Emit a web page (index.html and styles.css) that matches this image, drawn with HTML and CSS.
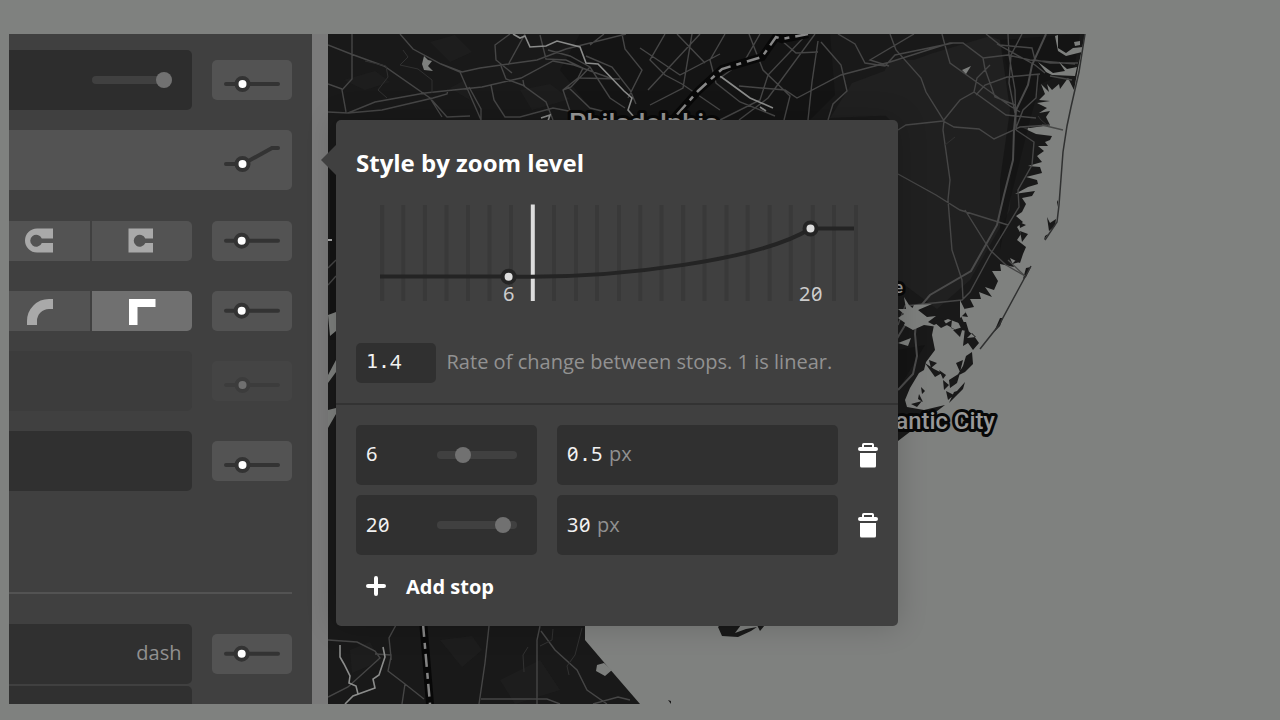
FILE: index.html
```
<!DOCTYPE html>
<html lang="en">
<head>
<meta charset="utf-8">
<title>Style by zoom level</title>
<link rel="stylesheet" href="styles.css">
</head>
<body>
<svg class="defs" width="0" height="0">
  <symbol id="flat" viewBox="0 0 80 40">
    <path d="M14 24H66" stroke="#333" stroke-width="4" stroke-linecap="round"/>
    <circle cx="30.500" cy="24" r="6" fill="#fff" stroke="#333" stroke-width="4"/>
  </symbol>
  <symbol id="flat-mid" viewBox="0 0 80 40">
    <path d="M14 19.700H66" stroke="#333" stroke-width="4" stroke-linecap="round"/>
    <circle cx="29.700" cy="19.700" r="6" fill="#fff" stroke="#333" stroke-width="4"/>
  </symbol>
  <symbol id="trash" viewBox="0 0 20 25">
    <path d="M5 4.500V1.800Q5 1 5.800 1H14.200Q15 1 15 1.800V4.500" fill="none" stroke="#fff" stroke-width="2"/>
    <rect y="4" width="20" height="4" rx="2" fill="#fff"/>
    <path d="M2 10H18V23Q18 24.500 16.500 24.500H3.500Q2 24.500 2 23Z" fill="#fff"/>
  </symbol>
</svg>
<main class="stage">
  <aside class="sidebar">
    <div class="row">
      <div class="field dark"><div class="slider"><i class="knob end"></i></div></div>
      <svg class="button"><use href="#flat"/></svg>
    </div>
    <div class="active-row">
      <svg width="80" height="60" viewBox="0 0 80 60" fill="none"><path d="M14 34H31L60 18H66" stroke="#333" stroke-width="4" stroke-linecap="round"/><circle cx="30.500" cy="34" r="6" fill="#fff" stroke="#333" stroke-width="4"/></svg>
    </div>
    <div class="row options">
      <div class="segments">
        <div class="segment left"><svg width="30" height="26" viewBox="0 0 30 26"><path d="M28 .5V10.500H16.800A6 6 0 1 0 16.800 15H28V24.500H12A12 12 0 0 1 12 .5Z" fill="#a9a9a9"/></svg></div>
        <div class="segment right"><svg width="26" height="26" viewBox="0 0 26 26"><path d="M.5 .5H25V10.500H17.300A6 6 0 1 0 17.300 15H25V24.500H.5Z" fill="#a9a9a9"/></svg></div>
      </div>
      <svg class="button"><use href="#flat-mid"/></svg>
    </div>
    <div class="row options">
      <div class="segments">
        <div class="segment left"><svg width="28" height="30" viewBox="0 0 28 30"><path d="M7 29V25A17 17 0 0 1 24 8H28" fill="none" stroke="#a9a9a9" stroke-width="10"/></svg></div>
        <div class="segment right selected"><svg width="28" height="30" viewBox="0 0 28 30"><path d="M1 29V3H27.500V11H9.500V29Z" fill="#fff"/></svg></div>
      </div>
      <svg class="button"><use href="#flat-mid"/></svg>
    </div>
    <div class="row disabled">
      <div class="field"></div>
      <svg class="button"><use href="#flat"/></svg>
    </div>
    <div class="row">
      <div class="field"></div>
      <svg class="button"><use href="#flat"/></svg>
    </div>
    <div class="divider"></div>
    <div class="row dash-row">
      <div class="field"><span class="unit">dash</span></div>
      <svg class="button"><use href="#flat-mid"/></svg>
    </div>
    <div class="row"><div class="field"></div></div>
  </aside>
  <div class="gutter"></div>
  <section class="map">
    <svg class="canvas" width="952" height="670" viewBox="328 34 952 670">
      <path fill="#191919" d="M328 34H1085L1078 68 1074 90 1068 78 1060 89 1059 84 1052 90 1047 84 1049 92 1041 84 1045 94 1039 100 1050 101 1037 103 1047 108 1039 113 1050 111 1046 117 1050 125 1030 128 1019 126 1036 134 1052 136 1050 140 1045 142 1048 146 1038 146 1044 151 1037 156 1042 162 1028 166 1040 167 1042 173 1026 177 1037 180 1038 184 1028 187 1015 194 1035 191 1032 196 1022 198 1026 204 1022 212 1016 216 1023 222 1017 227 1021 234 1017 240 1026 247 1023 254 1020 263 1010 258 1014 267 1000 264 1001 271 992 271 998 281 994 290 985 287 992 297 979 292 981 299 970 299 974 307 964 309 968 317 961 316 965 325 956 322 948 319 934 325 932 335 935 350 926 362 924 370 919 373 910 388 905 400 907 407 924 410 945 405 898 441V500H840V580H585V640L602 660 640 704H328Z"/>
      <path fill="#202020" d="M852 83 930 54 990 36 1000 40 1018 110 1012 150 1010 210 970 280 937 309 898 280V115L830 118ZM890 60 925 60 960 110 900 130 870 100Z"/>
      <path fill="#131313" opacity=".75" d="M580 34 830 34 835 95 810 120 600 120 560 70ZM330 160H336V340H330ZM1000 40 1080 34 1074 70 1040 84 1030 120 1010 200 1000 250 1000 180 1010 110ZM898 350 925 345 910 370 898 390Z"/>
      <g fill="#202020" opacity=".65">
        <path d="M344 80 375 71 390 82 365 90ZM430 42 455 35 472 52 450 62ZM520 90 550 84 570 99 532 110ZM450 88 465 80 470 100ZM350 650 370 642 380 661 352 673ZM440 640 472 636 482 650 462 667ZM500 680 540 660 560 690 515 704Z"/>
      </g>
      <g fill="none" stroke="#464646" stroke-width="1.400">
        <path d="M328 45 351 54 384 66 430 98 442 117M352 34 352 79 342 90 346 112M328 84 342 89M328 112 348 113 375 102 425 93 482 87 521 78 553 61 574 65 610 78M400 34 413 49 441 64 462 72 480 68 537 60 566 49 626 34M441 64 460 72 467 88 481 120M348 113 382 110 433 98 447 94 448 90M430 98 447 117 470 116M469 87 481 109 481 120M491 85 494 100 505 117 520 117 553 108 574 112M523 80 524 86 546 102 553 120M501 66 506 79 525 86M510 34 495 45 496 60 512 73M525 34 508 65M540 35 546 59 566 60 583 68 578 78 563 90 573 120M548 50 570 56 590 67 610 98 625 108M563 90 571 87 590 67M568 87 590 108 610 113M590 45 604 34M586 56 612 67 630 90 636 104M622 34 625 49 642 70 628 98M665 34 650 60 665 75 682 84 720 110M640 48 680 75 720 54M677 34 705 63M692 34 683 88 650 105M700 34 648 90M725 34 710 60 716 83 740 102 775 116M760 34 745 60 720 78M815 34 768 98 739 120M807 34 768 75 760 100 720 120M821 42 841 65 847 91 833 104 828 120M818 41 812 82 808 120M838 34 855 44 865 63 885 66 895 55 953 43M749 34 763 70 790 96 784 120M781 40 796 53 818 52M739 86 785 90 797 98 841 75 890 62 950 43 963 43 983 58 985 69 995 97 1015 105M890 34 896 50 921 78 926 92 944 121 943 130 950 180 948 200 952 250 962 280 963 299M942 34 946 49 950 63 985 88 1010 106 1020 112M914 34 870 60 889 66M1008 34 1009 55 1015 90 1016 130M1022 34 1011 55 1009 83 1015 113M986 34 1000 45 1032 48 1035 60 1050 63 1078 63M997 44 1035 65 1045 73M983 58 1008 55 1030 60 1075 64M898 130 906 125 943 121 954 127 979 129 994 139 1020 127 1050 125M943 121 960 100 974 92 977 78 990 65M974 92 1006 115 1036 118M976 95 985 85 1007 77 1040 74M1038 75 1036 98 1023 110 1016 128M898 174 936 195 960 210 1008 225M965 210 990 250 1006 265 1025 276M1016 130 1034 142 1032 165 1018 190 1019 207 990 255 970 292 962 300 905 306 898 325M580 78 620 79M328 268 336 260M328 285 336 276M328 640 357 642 375 651 380 658 348 687 328 697M375 654 391 655 391 660M396 625 389 638 391 657 388 671 405 684 424 699M405 684 402 704M489 626 485 663 479 704M540 626 537 640 537 704M541 631 555 650 577 670 587 690 607 704M481 699H547L560 704M593 704 618 697 630 700"/>
      </g>
      <g fill="none" stroke="#313131" stroke-width="1">
        <path d="M365 61 386 66 388 77 378 90 387 98M403 50 408 57 400 65 418 69 432 80 432 93M528 647 523 655 524 672M553 629 552 640 540 646M582 628 575 655 567 666 569 675M945 145 955 137M1038 116 1041 120 1048 126"/>
      </g>
      <path d="M1046 34 1032 65 1028 85 1016 110 1014 130 1013 160 1004 195 997 225 971 271 930 295 907 322 890 350M917 310 915 334 917 356 913 374 898 390" fill="none" stroke="#4b4b4b" stroke-width="2"/>
      <g fill="#7d7f7d">
        <path d="M1055 36 1058 35 1058 48 1066 53 1073 48 1083 47 1082 52 1066 56 1058 51ZM1074 42 1080 41 1080 45 1075 46ZM1038 62 1053 73 1065 71 1059 62 1067 69 1077 67 1075 76 1052 75 1046 72ZM424 56 428 60 432 61 428 66 433 71 424 70 422 64ZM962 70 971 66 966 74ZM904 297 909 305 917 312 912 318 922 320 908 325 898 318 904 314 898 309 906 309ZM914 305 932 304 918 310 927 317 936 316 928 322 938 327 924 325 913 330 904 325ZM898 343 911 338 908 346ZM960 300 966 312 960 318ZM597 665 604 663 612 670 605 676 596 671ZM328 315 336 312V331L330 336ZM328 375 336 360V372L328 383ZM328 410 336 408V414L328 428Z"/>
      </g>
      <g fill="#191919">
        <path d="M934 322 942 318 947 325 941 328ZM945 324 952 320 951 328 956 330ZM953 330 963 327 960 337ZM958 322 966 322 969 332 962 330ZM965 328 974 336 979 343 973 350 968 343 963 346ZM967 338 976 337 972 333ZM929 360 937 363 931 368ZM925 363 934 369 942 373 935 377ZM956 363 963 360 960 372ZM966 356 972 352 973 364 965 372 957 376 963 366ZM949 380 960 373 957 383 950 388ZM939 370 946 375 943 379ZM943 380 949 385 944 390ZM957 391 965 382 963 389 949 403 954 392ZM921 387 925 391 922 394ZM919 394 923 402 918 399ZM946 391 954 395 948 400ZM911 404 922 401 917 407ZM1012 264 1018 258 1020 262ZM1020 231 1028 234 1022 242ZM1019 222 1026 225 1020 228ZM1047 217 1050 223 1056 219 1055 226 1049 231ZM1045 236 1048 234 1044 240ZM1026 268 1031 267 1026 277 1023 279ZM1000 318 1003 318 1000 326 994 332ZM1057 202 1058 200 1058 207ZM718 627 720 625H741L735 633 746 629 757 627 751 631 738 637 722 636ZM757 625H765L760 631ZM668 700 671 701 671 704Z"/>
        <path d="M1085 34 1079 72 1071 107 1067 126 1063 152 1059 205 1057 222 1045 240M1031 266 1018 290 999 325 980 349" fill="none" stroke="#303131" stroke-width="1.500"/>
      </g>
      <path d="M1042 125 1063 130M1050 76 1072 80M1008 260 1025 276" fill="none" stroke="#484948" stroke-width="1.300"/>
      <g fill="none" stroke="#8b8c8b" stroke-width="1.600">
        <path d="M513 34 520 38 525 36 530 47 546 46 557 41 580 47 586 63 598 64 624 91 632 98 628 110 634 117M720 76 750 98 773 108M760 107 766 111M541 118 550 115 548 121M340 645 340 657 344 664 350 676 349 683 356 686 358 694M383 647 385 657 379 675 373 679 375 688 353 696 345 704"/>
      </g>
      <path d="M808 34 782 39 776 37 762 57 722 69 698 91 673 119M423 620 430 704" fill="none" stroke="#080808" stroke-width="8"/>
      <path d="M808 34 782 39 776 37 762 57 722 69 698 91 673 119" fill="none" stroke="#898989" stroke-width="2.500" stroke-dasharray="13 6 5 6"/>
      <path d="M423 624 430 704" fill="none" stroke="#858585" stroke-width="2.500" stroke-dasharray="13 6 6 5"/>
      <path d="M328 240H332" stroke="#aaa" stroke-width="2"/>
      <g class="places">
        <text x="569" y="132" font-size="25" textLength="150" lengthAdjust="spacingAndGlyphs">Philadelphia</text>
        <text x="894" y="293" font-size="17">e</text>
        <text x="866" y="429" font-size="24" textLength="129" lengthAdjust="spacingAndGlyphs">Atlantic City</text>
      </g>
    </svg>
  </section>
  <section class="popup">
    <h1 class="title">Style by zoom level</h1>
    <svg class="chart" width="562" height="120" viewBox="336 195 562 120">
      <path d="M382.200 205V301M403.300 205V301M424.900 205V301M446.500 205V301M468 205V301M489.500 205V301M511 205V301M554 205V301M576 205V301M597 205V301M619 205V301M640.300 205V301M661.500 205V301M683.200 205V301M704.500 205V301M726.500 205V301M747.700 205V301M769.700 205V301M790.800 205V301M812.800 205V301M834 205V301M856 205V301" stroke="#393939" stroke-width="4"/>
      <path d="M532.800 204.500V301" stroke="#ddd" stroke-width="4"/>
      <path d="M380 276.500H509C620 279 763 259 810.500 228.500H854" fill="none" stroke="#242424" stroke-width="4"/>
      <circle cx="508.600" cy="276.700" r="6" fill="#ddd" stroke="#242424" stroke-width="4"/>
      <circle cx="810.500" cy="228.500" r="6" fill="#ddd" stroke="#242424" stroke-width="4"/>
      <text class="axis" x="509" y="301">6</text>
      <text class="axis" x="811" y="301">20</text>
    </svg>
    <div class="rate">
      <div class="rate-input num"><span class="mono">1.</span>4</div>
      <div class="hint">Rate of change between stops. 1 is linear.</div>
    </div>
    <div class="stops">
      <div class="stop">
        <div class="cell zoom"><span class="num">6</span><div class="slider"><i class="knob six"></i></div></div>
        <div class="cell value"><span class="num">0<span class="mono">.</span>5</span><span class="unit">px</span></div>
        <svg class="trash"><use href="#trash"/></svg>
      </div>
      <div class="stop">
        <div class="cell zoom"><span class="num">20</span><div class="slider"><i class="knob twenty"></i></div></div>
        <div class="cell value"><span class="num">30</span><span class="unit">px</span></div>
        <svg class="trash"><use href="#trash"/></svg>
      </div>
      <div class="add">
        <svg width="20" height="20" viewBox="0 0 20 20"><path d="M10 2V18M2 10H18" stroke="#fff" stroke-width="4" stroke-linecap="round"/></svg>
        <span class="add-label">Add stop</span>
      </div>
    </div>
  </section>
</main>
</body>
</html>
```

FILE: styles.css
```
* { box-sizing: border-box; }
body { margin: 0; background: #7f817f; font-family: "Open Sans", "Noto Sans", sans-serif; }
.defs { display: block; }
.stage { position: relative; display: flex; width: 1280px; height: 720px; padding: 34px 0 16px 9px; overflow: hidden; }
.sidebar { width: 303px; height: 670px; padding: 16px 20px 0 0; background: #404040; overflow: hidden; }
.gutter { width: 16px; background: #7a7a7a; }
.map { width: 952px; height: 670px; }
.canvas { display: block; }
.row { display: flex; align-items: center; gap: 20.500px; height: 60px; margin-bottom: 20.400px; }
.field { display: flex; align-items: center; justify-content: flex-end; width: 182.500px; height: 60px; padding: 0 10px 2px 0; background: #303030; border-radius: 0 5px 5px 0; }
.field.dark { background: #2d2d2d; padding: 0 20px 0 0; }
.button { flex: none; width: 80px; height: 40px; background: #535353; border-radius: 5px; }
.slider { display: flex; align-items: center; width: 80px; height: 8px; background: #404040; border-radius: 4px; }
.knob { width: 16px; height: 16px; border-radius: 50%; background: #717171; }
.knob.end { margin-left: 64px; }
.knob.six { margin-left: 18px; }
.knob.twenty { margin-left: 58px; }
.active-row { display: flex; justify-content: flex-end; height: 60px; margin-bottom: 30.200px; background: #535353; border-radius: 0 5px 5px 0; }
.row.options { height: 40px; margin-bottom: 30px; }
.segments { display: flex; gap: 2px; width: 182.500px; height: 40px; }
.segment { display: flex; align-items: center; background: #535353; }
.segment.left { width: 80.500px; padding-left: 16px; }
.segment.right { width: 100px; padding-left: 36.500px; border-radius: 0 5px 5px 0; }
.segment.selected { background: #707070; }
.options + .disabled { margin-top: -9.800px; }
.disabled .field, .disabled .button { opacity: .25; }
.divider { height: 2px; margin: 100.700px 0 30px; background: #535353; }
.row:has(+ .divider) { margin-bottom: 0; }
.dash-row { margin-bottom: 2px; }
.unit { font-size: 20px; color: #909090; }
.popup { position: absolute; left: 336px; top: 120.400px; width: 562px; height: 505.500px; padding-top: 25px; background: #404040; border-radius: 5px; box-shadow: 0 0 30px rgba(0, 0, 0, .18); }
.popup::before { content: ""; position: absolute; left: -15.500px; top: 24.600px; border: 15.500px solid transparent; border-left: 0; border-right-color: #404040; }
.title { margin: 0 0 13.600px 20px; font-size: 24px; line-height: 36px; font-weight: 700; color: #fff; }
.chart { display: block; }
.axis { font-family: "Noto Sans", sans-serif; font-size: 20px; letter-spacing: .56px; font-feature-settings: "zero"; text-anchor: middle; fill: #ccc; }
.rate { display: flex; align-items: center; gap: 10.500px; height: 62px; padding: 0 20px 20px; margin: 28px 0 20px; border-bottom: 2px solid #333; }
.rate > * { flex: none; }
.rate-input { display: flex; align-items: center; width: 80px; height: 40px; padding: 0 0 3px 10px; background: #303030; border-radius: 5px; }
.num { font-family: "Noto Sans", sans-serif; font-size: 20px; letter-spacing: .56px; font-feature-settings: "zero"; color: #f2f2f2; }
.mono { font-family: "DejaVu Sans Mono", monospace; letter-spacing: 0; }
.hint { font-size: 20px; line-height: 28px; padding-bottom: 1px; color: #929292; white-space: nowrap; letter-spacing: .02px; }
.stops { padding-left: 20px; }
.stop { display: flex; align-items: center; height: 60px; margin-bottom: 10.300px; }
.cell { display: flex; align-items: center; height: 60px; padding: 0 20.500px 0 10px; background: #303030; border-radius: 5px; }
.cell > span { padding-bottom: 2px; }
.zoom { width: 181px; justify-content: space-between; margin-right: 20px; }
.value { width: 281px; gap: 6px; margin-right: 20px; }
.trash { width: 20px; height: 25px; margin-top: 1px; }
.add { display: flex; align-items: center; gap: 20px; padding-left: 10px; height: 40px; }
.add-label { font-size: 20px; font-weight: 700; color: #fff; padding-top: 1px; }
.places { font-family: Roboto, sans-serif; font-weight: 500; fill: #999; stroke: #080808; stroke-width: 6px; stroke-linejoin: round; paint-order: stroke; }
```
